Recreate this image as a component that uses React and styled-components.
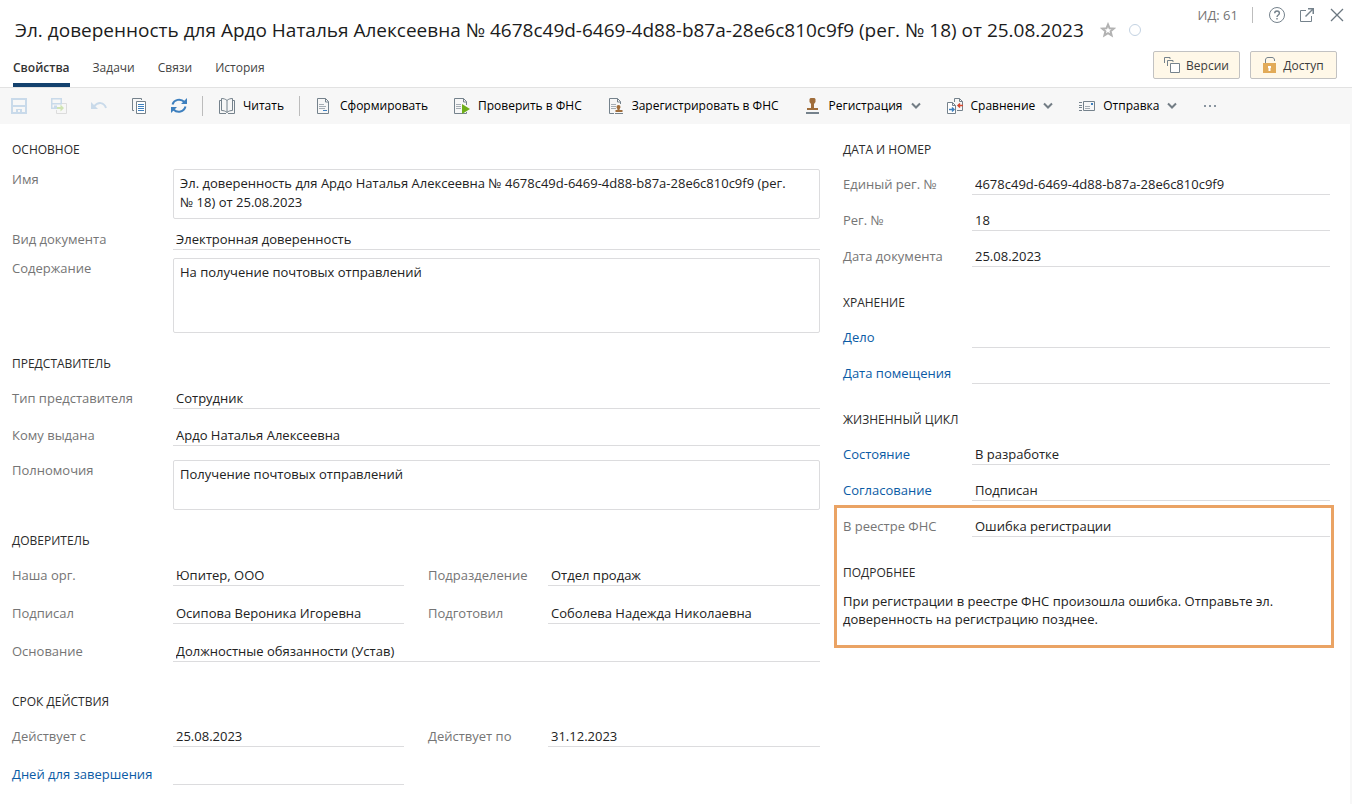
import { useId } from "react";
import styled, { createGlobalStyle, css } from "styled-components";

const COLORS = {
	text: "#222222",
	label: "#757575",
	link: "#0b5ba5",
	line: "#dcdcde",
	toolbar: "#f7f7f7",
	navy: "#14426e",
	blue: "#3e80bf",
	icon: "#75828c",
	cream: "#fff8e8",
	brown: "#a06d3b",
	green: "#6fae1b",
	highlight: "#eaa364",
};

const GlobalStyle = createGlobalStyle`
	*, *::before, *::after {
		box-sizing: border-box;
	}

	body {
		margin: 0;
		background: #ffffff;
		color: ${COLORS.text};
		font-family: "Open Sans", "Noto Sans", sans-serif;
		font-size: 13px;
	}
`;

/* Icons */

const Icon = ({ children, width = 16, height = 16 }) => (
	<Svg
		width={width}
		height={height}
		viewBox={`0 0 ${width} ${height}`}
		fill="none"
		aria-hidden="true"
	>
		{children}
	</Svg>
);

const SaveIcon = () => (
	<Icon>
		<path
			fill="#c9daea"
			fillRule="evenodd"
			d="M0 0h16v16H0zM2 2v5h12V2zM2 9v5h3v-3h6v3h3V9zM7 12v2h2v-2z"
		/>
	</Icon>
);

const SaveCloseIcon = () => (
	<Icon>
		<path
			fill="#c9daea"
			fillRule="evenodd"
			d="M0 0h11v5H9.500V1.500h-8V5H11v1.500H1.500v3H3V7.500h3V11H0z"
		/>
		<path stroke="#dcdcdc" d="M11 5.500h4.500v10h-10V12" />
		<path fill="#cfe4b3" d="M6 9h3.500V6.500L13 10l-3.500 3.500V11H6z" />
	</Icon>
);

const UndoIcon = () => (
	<Icon>
		<path stroke="#c9daea" strokeWidth="2" d="M3 8.500C7 3.500 13 4 15 10" />
		<path fill="#c9daea" d="M0 4v7h7z" />
	</Icon>
);

const CopyIcon = () => (
	<Icon>
		<path stroke={COLORS.icon} d="M3 12.500H1.500V.500h9V2" />
		<path stroke={COLORS.icon} fill="#fff" d="M5.500 3.500h9v12h-9z" />
		<path stroke={COLORS.blue} d="M7 6.500h6M7 8.500h6M7 10.500h6M7 12.500h6" />
	</Icon>
);

const RefreshIcon = () => (
	<Icon>
		<path
			stroke={COLORS.blue}
			strokeWidth="2"
			d="M1.500 6.500C3 1.500 9.500 0 13.500 4M14.500 8.500C13 14 6.500 15.500 2.500 11.500"
		/>
		<path fill={COLORS.blue} d="M16 0v6h-6zM0 15V9h6z" />
	</Icon>
);

const BookIcon = () => (
	<Icon>
		<path
			stroke={COLORS.icon}
			d="M8 2.500C6.500 1 4.500.500 2.500.500v12c2 0 4 .500 5.500 2 1.500-1.500 3.500-2 5.500-2V.500c-2 0-4 .500-5.500 2zM8 2.500v12M2.500 2.500h-2v13H7M13.500 2.500h2v13H9"
		/>
	</Icon>
);

const PageShape = () => (
	<>
		<path stroke={COLORS.icon} d="M1.500.500h8l3 3v12h-11z" />
		<path stroke={COLORS.icon} d="M9.500.500v3.500h3" />
		<path stroke="#a5adb4" d="M3 6.500h5M3 8.500h7M3 10.500h6" />
	</>
);

const PageIcon = () => (
	<Icon>
		<PageShape />
		<path stroke={COLORS.blue} d="M7 12.500h4" />
	</Icon>
);

const PageRunIcon = () => (
	<Icon>
		<path stroke={COLORS.icon} d="M12.500 7V3.500l-3-3h-9v15h12V14M9.500.500v3.500h3" />
		<path stroke="#a5adb4" d="M2 6.500h5M2 8.500h5M2 10.500h5" />
		<path fill={COLORS.green} d="M8 6l8 5-8 5z" />
	</Icon>
);

const PageStampIcon = () => (
	<Icon>
		<path stroke={COLORS.icon} d="M12.500 6V3.500l-3-3h-8v15H6M9.500.500v3.500h3" />
		<path stroke="#a5adb4" d="M3 6.500h5M3 8.500h5M3 10.500h5" />
		<path
			fill={COLORS.brown}
			d="M10.500 7a2 2 0 0 1 2 2c0 1-1 1.500-1 3h3v2h-7v-2h2c0-1.500-1-2-1-3a2 2 0 0 1 2-2z"
		/>
		<path stroke={COLORS.icon} d="M7 15.500h8" />
	</Icon>
);

const StampIcon = () => (
	<Icon>
		<path
			fill={COLORS.brown}
			d="M5.500 0h4l1 1v3L9 6v4h4v2H2v-2h4V6L4.500 4V1z"
		/>
		<path fill={COLORS.icon} d="M1 14h13v2H1z" />
	</Icon>
);

const CompareIcon = () => (
	<Icon>
		<path stroke={COLORS.icon} d="M7.500 4V.500h5l3 3v9H10M12.500.500v3h3" />
		<path stroke={COLORS.icon} fill="#fff" d="M.500 4.500h5l3 3v8h-8zM5.500 4.500v3h3" />
		<path stroke={COLORS.blue} strokeWidth="1.500" d="M2 11.500h5M5 9.500l2 2-2 2" />
		<path stroke="#d34a32" strokeWidth="1.500" d="M16 7.500h-5M13 5.500l-2 2 2 2" />
	</Icon>
);

const SendIcon = () => (
	<Icon>
		<path stroke={COLORS.icon} d="M4.500 3.500h11v9h-11zM0 4.500h3M0 7.500h3M0 9.500h3M0 12.500h3" />
		<path stroke={COLORS.blue} d="M12 5.500h2M12 6.500h2" />
		<path stroke="#a5adb4" d="M6 8.500h5M6 10.500h5" />
	</Icon>
);

const ChevronIcon = () => (
	<Icon width={10} height={8}>
		<path stroke="#737d85" strokeWidth="2" d="M1 1.500l4 4 4-4" />
	</Icon>
);

const DotsIcon = () => (
	<Icon width={14} height={4}>
		<path fill="#8995a0" d="M1 1h2v2H1zM6 1h2v2H6zM11 1h2v2h-2z" />
	</Icon>
);

const StarIcon = () => (
	<Icon>
		<path
			stroke="#b2b2b2"
			strokeWidth="2"
			d="M8 2.500l1.600 3.800 4.100.300-3.100 2.700 1 4L8 11.100l-3.600 2.200 1-4-3.100-2.700 4.100-.300z"
		/>
	</Icon>
);

const StatusIcon = () => (
	<Icon width={14} height={14}>
		<circle cx="7" cy="7" r="5.500" stroke="#c3d2e2" />
	</Icon>
);

const HelpIcon = () => (
	<Icon>
		<circle cx="8" cy="8" r="7.500" stroke={COLORS.icon} />
		<path
			stroke={COLORS.icon}
			strokeWidth="1.400"
			d="M5.700 6.300c0-3 4.700-3 4.700 0C10.400 8 8 8 8 10M8 11v1.600"
		/>
	</Icon>
);

const ExternalIcon = () => (
	<Icon>
		<path stroke={COLORS.icon} d="M7 3.500H1.500v11h11V9" />
		<path stroke={COLORS.icon} strokeWidth="1.500" d="M6.500 9.500L13.500 2.500" />
		<path fill={COLORS.icon} d="M9 1h6v6h-1.500V3.500L12.500 2.500H9z" />
	</Icon>
);

const CloseIcon = () => (
	<Icon>
		<path stroke="#6b7780" strokeWidth="1.300" d="M2 2l12 12M14 2L2 14" />
	</Icon>
);

const VersionsIcon = () => (
	<Icon>
		<path stroke={COLORS.icon} d="M.500 6V.500H6V2M3.500 9V3.500H9V5" />
		<path stroke={COLORS.icon} fill="#fff" d="M6.500 6.500h9v9h-9z" />
	</Icon>
);

const LockIcon = () => (
	<Icon width={14} height={16}>
		<path stroke={COLORS.icon} d="M2.500 6V3c0-1.500 1-2.500 2.500-2.500h4c1.500 0 2.500 1 2.500 2.500v1" />
		<path fill="#e2ab58" d="M0 6h13v10H0z" />
		<path fill="#fff" d="M5 9h3v2H7.500v3h-2v-3H5z" />
	</Icon>
);

/* Form parts */

const Field = ({ label, value = "", labelWidth, link, rows }) => {
	const id = useId();

	return (
		<FieldRow $labelWidth={labelWidth}>
			<FieldLabel htmlFor={id} $boxed={Boolean(rows)} $link={link}>
				{label}
			</FieldLabel>
			{rows ? (
				<TextArea id={id} defaultValue={value} $rows={rows} />
			) : (
				<LineInput id={id} type="text" defaultValue={value} />
			)}
		</FieldRow>
	);
};

const Section = ({ title, gap, titleGap = 12, children }) => (
	<SectionBlock $gap={titleGap}>
		<SectionTitle>{title}</SectionTitle>
		<SectionRows $gap={gap}>{children}</SectionRows>
	</SectionBlock>
);

const TABS = ["Свойства", "Задачи", "Связи", "История"];

const ICON_ACTIONS = [
	{ label: "Сохранить", icon: <SaveIcon />, disabled: true },
	{ label: "Сохранить и закрыть", icon: <SaveCloseIcon />, disabled: true },
	{ label: "Отменить", icon: <UndoIcon />, disabled: true },
	{ label: "Копировать", icon: <CopyIcon /> },
	{ label: "Обновить", icon: <RefreshIcon /> },
];

const ACTIONS = [
	{ label: "Сформировать", icon: <PageIcon /> },
	{ label: "Проверить в ФНС", icon: <PageRunIcon /> },
	{ label: "Зарегистрировать в ФНС", icon: <PageStampIcon /> },
	{ label: "Регистрация", icon: <StampIcon />, menu: true },
	{ label: "Сравнение", icon: <CompareIcon />, menu: true },
	{ label: "Отправка", icon: <SendIcon />, menu: true },
];

const App = () => (
	<>
		<GlobalStyle />
		<Page>
			<Header>
				<HeaderMain>
					<TitleRow>
						<Title>
							Эл. доверенность для Ардо Наталья Алексеевна №
							4678c49d-6469-4d88-b87a-28e6c810c9f9 (рег. № 18) от 25.08.2023
						</Title>
						<IconButton aria-label="В избранное">
							<StarIcon />
						</IconButton>
						<StatusIcon />
					</TitleRow>
					<Tabs>
						{TABS.map((tab, index) => (
							<Tab key={tab} $active={index === 0}>
								{tab}
							</Tab>
						))}
					</Tabs>
				</HeaderMain>
				<HeaderSide>
					<WindowRow>
						<DocumentId>ИД: 61</DocumentId>
						<WindowDivider />
						<IconButton aria-label="Справка">
							<HelpIcon />
						</IconButton>
						<IconButton aria-label="Открыть в новом окне">
							<ExternalIcon />
						</IconButton>
						<IconButton aria-label="Закрыть">
							<CloseIcon />
						</IconButton>
					</WindowRow>
					<SideButtons>
						<SideButton>
							<VersionsIcon />
							Версии
						</SideButton>
						<SideButton>
							<LockIcon />
							Доступ
						</SideButton>
					</SideButtons>
				</HeaderSide>
			</Header>

			<Toolbar>
				{ICON_ACTIONS.map(({ label, icon, disabled }) => (
					<IconButton key={label} aria-label={label} disabled={disabled}>
						{icon}
					</IconButton>
				))}
				<Divider />
				<ToolbarButton>
					<BookIcon />
					Читать
				</ToolbarButton>
				<Divider />
				<ToolbarGroup>
					{ACTIONS.map(({ label, icon, menu }) => (
						<ToolbarButton key={label}>
							{icon}
							{label}
							{menu && <ChevronIcon />}
						</ToolbarButton>
					))}
					<IconButton aria-label="Ещё">
						<DotsIcon />
					</IconButton>
				</ToolbarGroup>
			</Toolbar>

			<Content>
				<Column $space={21}>
					<Section title="Основное" gap={8} titleGap={9}>
						<Field
							label="Имя"
							labelWidth={161}
							rows={2}
							value={
								"Эл. доверенность для Ардо Наталья Алексеевна № 4678c49d-6469-4d88-b87a-28e6c810c9f9 (рег. №\u00a018) от 25.08.2023"
							}
						/>
						<Field label="Вид документа" labelWidth={161} value="Электронная доверенность" />
						<Field
							label="Содержание"
							labelWidth={161}
							rows={3}
							value="На получение почтовых отправлений"
						/>
					</Section>
					<Section title="Представитель" gap={14}>
						<Field label="Тип представителя" labelWidth={161} value="Сотрудник" />
						<Field label="Кому выдана" labelWidth={161} value="Ардо Наталья Алексеевна" />
						<Field
							label="Полномочия"
							labelWidth={161}
							rows={2}
							value="Получение почтовых отправлений"
						/>
					</Section>
					<Section title="Доверитель" gap={15}>
						<Pair>
							<Field label="Наша орг." labelWidth={161} value="Юпитер, ООО" />
							<Field label="Подразделение" labelWidth={120} value="Отдел продаж" />
						</Pair>
						<Pair>
							<Field label="Подписал" labelWidth={161} value="Осипова Вероника Игоревна" />
							<Field label="Подготовил" labelWidth={120} value="Соболева Надежда Николаевна" />
						</Pair>
						<Field
							label="Основание"
							labelWidth={161}
							value="Должностные обязанности (Устав)"
						/>
					</Section>
					<LastSection>
						<Section title="Срок действия" gap={15}>
							<Pair>
								<Field label="Действует с" labelWidth={161} value="25.08.2023" />
								<Field label="Действует по" labelWidth={120} value="31.12.2023" />
							</Pair>
							<Pair>
								<Field label="Дней для завершения" labelWidth={161} link />
							</Pair>
						</Section>
					</LastSection>
				</Column>

				<Column $space={26}>
					<Section title="Дата и номер" gap={13}>
						<Field
							label="Единый рег. №"
							labelWidth={129}
							value="4678c49d-6469-4d88-b87a-28e6c810c9f9"
						/>
						<Field label="Рег. №" labelWidth={129} value="18" />
						<Field label="Дата документа" labelWidth={129} value="25.08.2023" />
					</Section>
					<Section title="Хранение" gap={13}>
						<Field label="Дело" labelWidth={129} link />
						<Field label="Дата помещения" labelWidth={129} link />
					</Section>
					<div>
						<Section title="Жизненный цикл" gap={13}>
							<Field label="Состояние" labelWidth={129} link value="В разработке" />
							<Field label="Согласование" labelWidth={129} link value="Подписан" />
						</Section>
						<Highlight>
							<Field label="В реестре ФНС" labelWidth={129} value="Ошибка регистрации" />
							<section>
								<SectionTitle>Подробнее</SectionTitle>
								<Details>
									При регистрации в реестре ФНС произошла ошибка. Отправьте эл.
									доверенность на регистрацию позднее.
								</Details>
							</section>
						</Highlight>
					</div>
				</Column>
			</Content>
		</Page>
	</>
);

const Svg = styled.svg`
	display: block;
	flex: none;
`;

const Page = styled.div`
	min-height: 100vh;
	display: flex;
	flex-direction: column;
`;

const Header = styled.header`
	display: flex;
	justify-content: space-between;
	border-bottom: 1px solid #e2e2e2;
`;

const HeaderMain = styled.div`
	flex: 1;
	min-width: 0;
	padding: 16px 0 0 13px;
	display: flex;
	flex-direction: column;
	justify-content: space-between;
`;

const TitleRow = styled.div`
	display: flex;
	align-items: center;
	gap: 12px;
`;

const Title = styled.h1`
	margin: 0 4px 0 2px;
	font-size: 19px;
	line-height: 28px;
	font-weight: 400;
	color: #1c1c1c;
	white-space: nowrap;
`;

const Tabs = styled.nav`
	display: flex;
	gap: 23px;
`;

const buttonReset = css`
	margin: 0;
	padding: 0;
	border: none;
	background: none;
	color: inherit;
	font: inherit;
	cursor: pointer;
`;

const Tab = styled.button`
	${buttonReset}
	height: 30px;
	padding-bottom: 4px;
	font-size: 12px;
	line-height: 20px;
	color: #444444;
	border-bottom: 4px solid transparent;

	${({ $active }) =>
		$active &&
		css`
			color: #333333;
			font-weight: 600;
			border-bottom-color: ${COLORS.navy};
		`}
`;

const HeaderSide = styled.div`
	display: flex;
	flex-direction: column;
	align-items: flex-end;
	gap: 22px;
	padding: 5px 7px 8px 0;
`;

const WindowRow = styled.div`
	display: flex;
	align-items: center;
	gap: 14px;
	height: 20px;
`;

const DocumentId = styled.span`
	font-size: 13px;
	color: ${COLORS.label};
`;

const WindowDivider = styled.span`
	width: 1px;
	height: 16px;
	margin-right: 2px;
	background: #bdbdbd;
`;

const SideButtons = styled.div`
	display: flex;
	gap: 10px;
	padding: 4px 8px 0 0;
`;

const SideButton = styled.button`
	${buttonReset}
	display: flex;
	align-items: center;
	justify-content: center;
	gap: 6px;
	min-width: 87px;
	height: 28px;
	padding: 0 10px;
	border: 1px solid #c2c2c2;
	border-radius: 2px;
	background: ${COLORS.cream};
	font-size: 12px;
	color: #3c3c3c;
`;

const IconButton = styled.button`
	${buttonReset}
	display: flex;
	flex: none;

	&:disabled {
		cursor: default;
	}
`;

const Toolbar = styled.div`
	display: flex;
	align-items: center;
	gap: 24px;
	height: 36px;
	padding: 0 11px;
	background: ${COLORS.toolbar};
`;

const ToolbarGroup = styled.div`
	display: flex;
	align-items: center;
	gap: 26px;
`;

const Divider = styled.span`
	width: 1px;
	height: 20px;
	margin: 0 -8px 0 -9px;
	background: #bcbcbc;
`;

const ToolbarButton = styled.button`
	${buttonReset}
	display: flex;
	align-items: center;
	gap: 8px;
	font-size: 12px;
	line-height: 20px;
	white-space: nowrap;
	color: #000000;
`;

const Content = styled.main`
	flex: 1;
	display: grid;
	grid-template-columns: 808fr 487fr;
	gap: 23px;
	align-items: start;
	padding: 16px 20px 19px 12px;
	border-right: 2px solid ${COLORS.toolbar};
`;

const Column = styled.div`
	display: flex;
	flex-direction: column;
	gap: ${({ $space }) => $space}px;
	min-width: 0;
`;

const SectionBlock = styled.section`
	display: flex;
	flex-direction: column;
	gap: ${({ $gap }) => $gap}px;
`;

const LastSection = styled.div`
	padding-top: 9px;
`;

const SectionTitle = styled.h2`
	margin: 0;
	font-size: 12px;
	line-height: 20px;
	font-weight: 400;
	text-transform: uppercase;
	color: #2b2b2b;
`;

const SectionRows = styled.div`
	display: flex;
	flex-direction: column;
	gap: ${({ $gap }) => $gap}px;
`;

const Pair = styled.div`
	display: grid;
	grid-template-columns: 1fr 1fr;
	gap: 24px;
`;

const FieldRow = styled.div`
	display: grid;
	grid-template-columns: ${({ $labelWidth }) => $labelWidth}px minmax(0, 1fr);
	align-items: start;
`;

const FieldLabel = styled.label`
	padding-top: ${({ $boxed }) => ($boxed ? 0 : 2)}px;
	line-height: 20px;
	white-space: nowrap;
	color: ${({ $link }) => ($link ? COLORS.link : COLORS.label)};
`;

const controlStyles = css`
	display: block;
	width: 100%;
	margin: 0;
	font: inherit;
	color: ${COLORS.text};
	background: #ffffff;
	border: 0 solid ${COLORS.line};
	outline: none;

	&:focus {
		border-color: ${COLORS.blue};
	}
`;

const LineInput = styled.input`
	${controlStyles}
	height: 23px;
	padding: 1px 3px 0;
	border-bottom-width: 1px;
	border-radius: 0;
`;

const TextArea = styled.textarea`
	${controlStyles}
	height: ${({ $rows }) => $rows * 25}px;
	padding: 4px 6px;
	line-height: 19px;
	border-width: 1px;
	border-radius: 2px;
	resize: none;
	overflow: hidden;
`;

const Highlight = styled.div`
	display: flex;
	flex-direction: column;
	gap: 26px;
	margin: 4px -4px 0 -9px;
	padding: 6px 1px 17px 6px;
	border: 3px solid ${COLORS.highlight};
`;

const Details = styled.p`
	margin: 9px 0 0;
	line-height: 18px;
	color: ${COLORS.text};
`;

export default App;
